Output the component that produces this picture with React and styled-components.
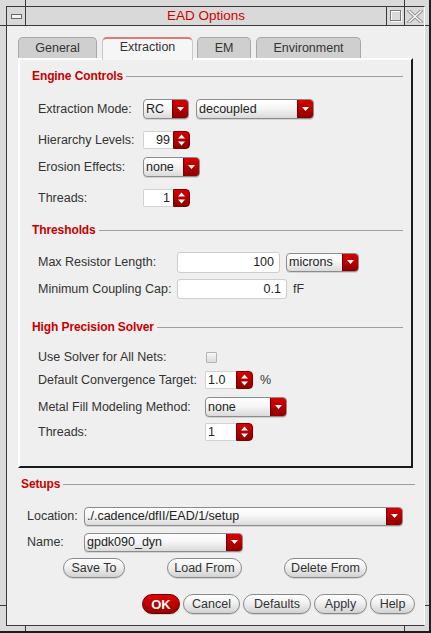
import React from "react";
import styled, { createGlobalStyle } from "styled-components";

const GlobalStyle = createGlobalStyle`
  html, body { margin: 0; padding: 0; background: #dadada; }
  body { font-family: "Liberation Sans", Arial, sans-serif; }
  * { box-sizing: border-box; }
`;

const FONT = `"Liberation Sans", Arial, sans-serif`;

const Window = styled.div`
  position: relative;
  width: 431px;
  height: 633px;
  background: #dadada;
  border-right: 2px solid #1e1e1e;
  border-bottom: 2px solid #1e1e1e;
  padding: 6px 4px 5px 6px;
  display: flex;
  font-family: ${FONT};
`;

const Tick = styled.span`
  position: absolute;
  background: #3a3a3a;
  left: ${(p) => p.$x}px;
  top: ${(p) => p.$y}px;
  width: ${(p) => p.$w}px;
  height: ${(p) => p.$h}px;
`;

const Frame = styled.div`
  flex: 1;
  display: flex;
  flex-direction: column;
  border-left: 1px solid #3a3a3a;
  border-top: 1px solid #3a3a3a;
  border-right: 1px solid #fafafa;
  border-bottom: 1px solid #3a3a3a;
`;

const TitleBar = styled.div`
  display: flex;
  height: 19px;
  background: #d9d9d9;
  border-bottom: 1px solid #3a3a3a;
`;

const TitleButton = styled.div`
  width: ${(p) => p.$w}px;
  display: flex;
  align-items: center;
  justify-content: center;
  ${(p) => (p.$side === "left" ? "border-right: 1px solid #3a3a3a;" : "border-left: 1px solid #3a3a3a;")}
`;

const Title = styled.div`
  flex: 1;
  text-align: center;
  color: #d00000;
  font-size: 13.5px;
  line-height: 18px;
`;

const Body = styled.div`
  flex: 1;
  display: flex;
  flex-direction: column;
  background: #efefef;
  padding: 11px 10px 0 11px;
`;

const TabRow = styled.div`
  display: flex;
  align-items: flex-start;
  height: 21px;
`;

const Tab = styled.div`
  position: relative;
  z-index: 1;
  width: ${(p) => p.$w}px;
  margin-left: ${(p) => p.$ml}px;
  height: ${(p) => (p.$active ? 23 : 21)}px;
  border: 1px solid #a8a8a8;
  border-bottom: none;
  border-radius: 5px 5px 0 0;
  background: ${(p) => (p.$active ? "#f6f6f6" : "#cfcfcf")};
  ${(p) => p.$active && "border-top: 2px solid #e07878; border-left-color: #c8c8c8; border-right-color: #c8c8c8;"}
  color: #333;
  font-size: 12.5px;
  line-height: ${(p) => (p.$active ? 17 : 20)}px;
  text-align: center;
`;

const Panel = styled.div`
  width: 395px;
  height: 410px;
  border: 2px solid;
  border-color: #ffffff #1a1a1a #1a1a1a #ffffff;
  padding: 8px 8px 0 12px;
  display: flex;
  flex-direction: column;
`;

const HeaderRow = styled.div`
  display: flex;
  align-items: center;
  height: 16px;
  margin: ${(p) => p.$m || "0"};
`;

const HeaderTitle = styled.span`
  color: #c80000;
  font-weight: bold;
  font-size: 12px;
  letter-spacing: -0.1px;
  white-space: nowrap;
`;

const HeaderLine = styled.span`
  flex: 1;
  height: 1px;
  background: #a0a0a0;
  margin-left: 3px;
`;

const Row = styled.div`
  display: flex;
  align-items: center;
  height: 22px;
  margin-top: ${(p) => p.$mt}px;
  padding-left: ${(p) => p.$pl ?? 6}px;
`;

const Label = styled.span`
  width: ${(p) => p.$w}px;
  flex: none;
  color: #333;
  font-size: 12.5px;
  white-space: nowrap;
`;

const Unit = styled.span`
  margin-left: ${(p) => p.$ml}px;
  color: #333;
  font-size: 12.5px;
`;

const ComboBox = styled.div`
  display: flex;
  flex: none;
  width: ${(p) => p.$w}px;
  height: ${(p) => p.$h || 20}px;
  margin-left: ${(p) => p.$ml || 0}px;
  border: 1px solid #8c8c8c;
  border-radius: 4px;
  overflow: hidden;
  background: linear-gradient(#ffffff, #f6f6f6 45%, #dadada);
  box-shadow: 0 1px 0 rgba(0, 0, 0, 0.12);
`;

const ComboText = styled.span`
  flex: 1;
  display: flex;
  align-items: center;
  padding-left: 2px;
  color: #222;
  font-size: 12.5px;
  white-space: nowrap;
  overflow: hidden;
`;

const RedPart = styled.span`
  width: ${(p) => p.$w || 16}px;
  flex: none;
  display: flex;
  align-items: center;
  justify-content: center;
  background: linear-gradient(#d80000, #b00000 55%, #8c0000);
  border-left: 1px solid #7a0000;
`;

const SpinBox = styled.div`
  display: flex;
  flex: none;
  width: ${(p) => p.$w}px;
  height: 18px;
`;

const SpinField = styled.span`
  flex: 1;
  display: flex;
  align-items: center;
  justify-content: ${(p) => (p.$left ? "flex-start" : "flex-end")};
  padding: 0 3px 0 2px;
  background: #fff;
  border: 1px solid #d2d2d2;
  border-right: none;
  border-radius: 2px 0 0 2px;
  color: #222;
  font-size: 12.5px;
`;

const SpinArrows = styled(RedPart)`
  border-radius: 0 4px 4px 0;
  border: 1px solid #7a0000;
`;

const TextField = styled.div`
  flex: none;
  width: ${(p) => p.$w}px;
  height: ${(p) => p.$h}px;
  display: flex;
  align-items: center;
  justify-content: flex-end;
  padding-right: 5px;
  background: #fff;
  border: 1px solid #cdcdcd;
  border-radius: 3px;
  color: #222;
  font-size: 12.5px;
`;

const Checkbox = styled.span`
  width: 11px;
  height: 11px;
  margin-left: 1px;
  border: 1px solid #b4b4b4;
  border-radius: 1px;
  background: linear-gradient(#f6f6f6, #dcdcdc);
`;

const ButtonRow = styled.div`
  display: flex;
  align-items: center;
  height: 22px;
  gap: ${(p) => p.$gap}px;
  margin-top: ${(p) => p.$mt}px;
  padding-left: ${(p) => p.$pl || 0}px;
  justify-content: ${(p) => (p.$end ? "flex-end" : "flex-start")};
  margin-right: ${(p) => p.$mr || 0}px;
`;

const Button = styled.div`
  width: ${(p) => p.$w}px;
  height: 20px;
  display: flex;
  align-items: center;
  justify-content: center;
  border-radius: 10px;
  border: 1px solid ${(p) => (p.$primary ? "#6a0000" : "#8a8a8a")};
  background: ${(p) =>
    p.$primary
      ? "linear-gradient(#e40000, #b80000 55%, #960000)"
      : "linear-gradient(#ffffff, #f0f0f0 45%, #d2d2d2)"};
  color: ${(p) => (p.$primary ? "#fff" : "#333")};
  font-size: ${(p) => (p.$primary ? 13 : 12.5)}px;
  font-weight: ${(p) => (p.$primary ? "bold" : "normal")};
  box-shadow: 0 1px 0 rgba(0, 0, 0, 0.12);
`;

const DownArrow = () => (
  <svg width="9" height="6" viewBox="0 0 9 6">
    <polygon points="1,1 8,1 4.5,5" fill="#fff" />
  </svg>
);

const UpDown = () => (
  <svg width="9" height="14" viewBox="0 0 9 14">
    <polygon points="1,5.5 4.5,1.5 8,5.5" fill="#fff" />
    <polygon points="1,8.5 4.5,12.5 8,8.5" fill="#fff" />
  </svg>
);

const Combo = ({ w, h, ml, value }) => (
  <ComboBox $w={w} $h={h} $ml={ml}>
    <ComboText>{value}</ComboText>
    <RedPart>
      <DownArrow />
    </RedPart>
  </ComboBox>
);

const Spin = ({ w, value, left }) => (
  <SpinBox $w={w}>
    <SpinField $left={left}>{value}</SpinField>
    <SpinArrows $w={17}>
      <UpDown />
    </SpinArrows>
  </SpinBox>
);

export default function App() {
  return (
    <>
      <GlobalStyle />
      <Window>
        <Tick $x={25} $y={0} $w={1} $h={6} />
        <Tick $x={404} $y={0} $w={1} $h={6} />
        <Tick $x={0} $y={25} $w={6} $h={1} />
        <Tick $x={425} $y={25} $w={4} $h={1} />
        <Tick $x={25} $y={626} $w={1} $h={5} />
        <Tick $x={404} $y={626} $w={1} $h={5} />
        <Tick $x={0} $y={605} $w={6} $h={1} />
        <Tick $x={425} $y={605} $w={4} $h={1} />
        <Frame>
          <TitleBar>
            <TitleButton $w={19} $side="left">
              <svg width="11" height="5" viewBox="0 0 11 5">
                <rect x="0.5" y="0.5" width="10" height="4" fill="#f4f4f4" stroke="#6a6a6a" />
              </svg>
            </TitleButton>
            <Title>EAD Options</Title>
            <TitleButton $w={18}>
              <svg width="12" height="12" viewBox="0 0 12 12">
                <rect x="1.5" y="1.5" width="10" height="10" fill="none" stroke="#fafafa" />
                <rect x="0.5" y="0.5" width="10" height="10" fill="none" stroke="#7a7a7a" />
              </svg>
            </TitleButton>
            <TitleButton $w={20}>
              <svg width="16" height="13" viewBox="0 0 16 13">
                <path d="M2 1 L14 12 M14 1 L2 12" stroke="#8a8a8a" strokeWidth="3.2" strokeLinecap="square" />
                <path d="M2 1 L14 12 M14 1 L2 12" stroke="#f8f8f8" strokeWidth="1.4" strokeLinecap="square" />
              </svg>
            </TitleButton>
          </TitleBar>
          <Body>
            <TabRow>
              <Tab $w={79} $ml={0}>General</Tab>
              <Tab $w={91} $ml={5} $active>Extraction</Tab>
              <Tab $w={54} $ml={4}>EM</Tab>
              <Tab $w={105} $ml={5}>Environment</Tab>
            </TabRow>
            <Panel>
              <HeaderRow>
                <HeaderTitle>Engine Controls</HeaderTitle>
                <HeaderLine />
              </HeaderRow>
              <Row $mt={14}>
                <Label $w={105}>Extraction Mode:</Label>
                <Combo w={46} value="RC" />
                <Combo w={118} ml={7} value="decoupled" />
              </Row>
              <Row $mt={9}>
                <Label $w={105}>Hierarchy Levels:</Label>
                <Spin w={47} value="99" />
              </Row>
              <Row $mt={5}>
                <Label $w={105}>Erosion Effects:</Label>
                <Combo w={57} value="none" />
              </Row>
              <Row $mt={9}>
                <Label $w={105}>Threads:</Label>
                <Spin w={47} value="1" />
              </Row>

              <HeaderRow $m="13px 0 0 0">
                <HeaderTitle>Thresholds</HeaderTitle>
                <HeaderLine />
              </HeaderRow>
              <Row $mt={13}>
                <Label $w={139}>Max Resistor Length:</Label>
                <TextField $w={103} $h={21}>100</TextField>
                <Combo w={73} h={19} ml={6} value="microns" />
              </Row>
              <Row $mt={5}>
                <Label $w={139}>Minimum Coupling Cap:</Label>
                <TextField $w={110} $h={20}>0.1</TextField>
                <Unit $ml={6}>fF</Unit>
              </Row>

              <HeaderRow $m="19px 0 0 0">
                <HeaderTitle>High Precision Solver</HeaderTitle>
                <HeaderLine />
              </HeaderRow>
              <Row $mt={11}>
                <Label $w={167}>Use Solver for All Nets:</Label>
                <Checkbox />
              </Row>
              <Row $mt={1}>
                <Label $w={167}>Default Convergence Target:</Label>
                <Spin w={48} value="1.0" left />
                <Unit $ml={7}>%</Unit>
              </Row>
              <Row $mt={5}>
                <Label $w={167}>Metal Fill Modeling Method:</Label>
                <Combo w={82} value="none" />
              </Row>
              <Row $mt={3}>
                <Label $w={167}>Threads:</Label>
                <Spin w={48} value="1" left />
              </Row>
            </Panel>

            <HeaderRow $m="8px -1px 0 3px">
              <HeaderTitle>Setups</HeaderTitle>
              <HeaderLine />
            </HeaderRow>
            <Row $mt={13} $pl={9}>
              <Label $w={57}>Location:</Label>
              <Combo w={319} h={19} value="./.cadence/dfII/EAD/1/setup" />
            </Row>
            <Row $mt={4} $pl={9}>
              <Label $w={57}>Name:</Label>
              <Combo w={159} h={19} value="gpdk090_dyn" />
            </Row>
            <ButtonRow $mt={4} $pl={45} $gap={42}>
              <Button $w={62}>Save To</Button>
              <Button $w={75}>Load From</Button>
              <Button $w={83}>Delete From</Button>
            </ButtonRow>
            <ButtonRow $mt={14} $gap={3} $end $mr={-1}>
              <Button $w={38} $primary>OK</Button>
              <Button $w={57}>Cancel</Button>
              <Button $w={68}>Defaults</Button>
              <Button $w={53}>Apply</Button>
              <Button $w={45}>Help</Button>
            </ButtonRow>
          </Body>
        </Frame>
      </Window>
    </>
  );
}
